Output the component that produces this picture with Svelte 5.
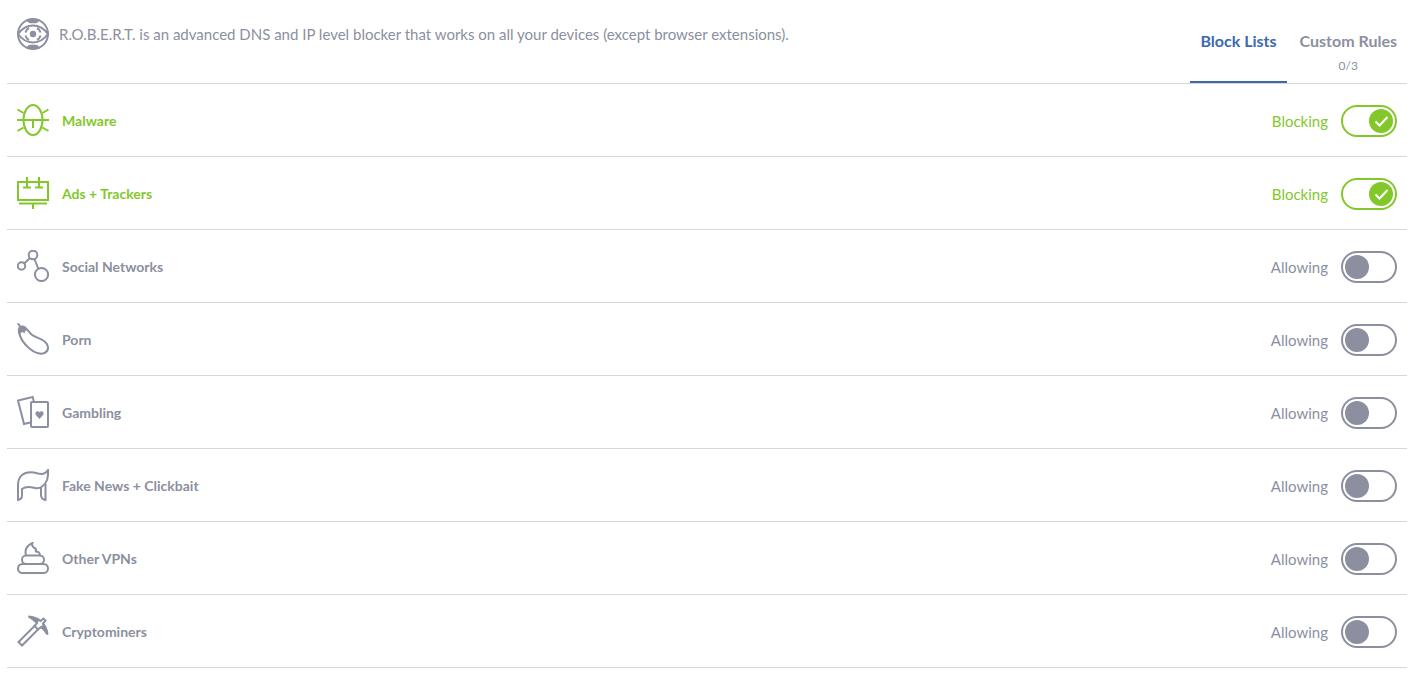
<script lang="ts">
  type BlockList = {
    id: string;
    label: string;
    blocking: boolean;
  };

  let activeTab = $state<'lists' | 'rules'>('lists');

  let lists = $state<BlockList[]>([
    { id: 'malware', label: 'Malware', blocking: true },
    { id: 'ads', label: 'Ads + Trackers', blocking: true },
    { id: 'social', label: 'Social Networks', blocking: false },
    { id: 'porn', label: 'Porn', blocking: false },
    { id: 'gambling', label: 'Gambling', blocking: false },
    { id: 'fakenews', label: 'Fake News + Clickbait', blocking: false },
    { id: 'vpns', label: 'Other VPNs', blocking: false },
    { id: 'crypto', label: 'Cryptominers', blocking: false }
  ]);

  const rulesUsed = 0;
  const rulesLimit = 3;
</script>

<main class="robert">
  <header class="header">
    <div class="intro">
      <svg class="icon" viewBox="0 0 32 32" aria-hidden="true">
        <circle cx="16" cy="16" r="15" />
        <path d="M1 16C5 10.500 10 7.500 16 7.500s11 3 15 8.500c-4 5.500-9 8.500-15 8.500S5 21.500 1 16z" />
        <path d="M12 10a7 7 0 0 0-3.500 4.500M8.500 17.500A7 7 0 0 0 12 22M20 10a7 7 0 0 1 3.500 4.500M23.500 17.500A7 7 0 0 1 20 22" />
        <circle class="solid" cx="16" cy="16" r="3.200" />
        <path class="solid" d="M9 1.500h14c-1 2-2.500 3.700-4.500 3.700h-5C11.500 5.200 10 3.500 9 1.500zM9 30.500h14c-1-2-2.500-3.700-4.500-3.700h-5c-2 0-3.500 1.700-4.500 3.700z" />
      </svg>
      <p>R.O.B.E.R.T. is an advanced DNS and IP level blocker that works on all your devices (except browser extensions).</p>
    </div>

    <nav class="tabs">
      <button class="tab" class:active={activeTab === 'lists'} onclick={() => (activeTab = 'lists')}>
        Block Lists
      </button>
      <button class="tab" class:active={activeTab === 'rules'} onclick={() => (activeTab = 'rules')}>
        Custom Rules
        <span class="count">{rulesUsed}/{rulesLimit}</span>
      </button>
    </nav>
  </header>

  <ul class="lists">
    {#each lists as list (list.id)}
      <li>
        <label class="row" class:blocking={list.blocking}>
          <svg class="icon" viewBox="0 0 32 32" aria-hidden="true">
            {#if list.id === 'malware'}
              <ellipse cx="16" cy="16" rx="9.500" ry="15" />
              <path d="M0 16h32M16 16v8M.5 5.500l6 3.500M31.500 5.500l-6 3.500M.5 27l6-3.500M31.500 27l-6-3.500" />
            {:else if list.id === 'ads'}
              <path d="M1 5h30v18H1zM10 0v10M22 0v10M6 10.500h8M18 10.500h8M2 26.500h28M16 26.500V32" />
            {:else if list.id === 'social'}
              <circle cx="4.500" cy="16" r="3.700" />
              <circle cx="16" cy="5" r="4.300" />
              <circle cx="24.500" cy="24.500" r="6.600" />
              <path d="M7.200 13.500l5.700-5.500M17.500 9l3.700 9.500" />
            {:else if list.id === 'porn'}
              <path d="M2 8.500c1 7 5 12.500 10.500 17 5 4.200 11 6 15 4.500 4.500-1.800 4.500-7.500 1-10.800C24.500 15 18.500 15 14.500 11.500c-2-1.800-2.500-3.500-4.500-5" />
              <path class="solid" d="M0 .5L1.800 0l2 2.700c3-.8 5.700.6 7.700 4.800L8.500 7.500 7.500 10 5 9 2 12C.6 9 .2 6 2 3.800z" />
            {:else if list.id === 'gambling'}
              <rect x="14" y="6" width="17" height="25" rx="1" />
              <path d="M17 6l-1.300-5L1 4.500l6 23.500 6-1.500" />
              <path class="solid" d="M22.500 23l-3.400-3.700c-2.300-2.800 1.500-5.700 3.400-3 1.900-2.700 5.700.2 3.400 3z" />
            {:else if list.id === 'fakenews'}
              <path d="M5 20c4.500-3.500 9-2 13-1 5 1.200 10-2.500 12-8 1-3 1.200-6.500 1-10-2.200 3.800-6 4.500-10 3.500C14.500 2.500 9 2.500 5 6c-3 2.500-4 6-4 10.500V31c3-.5 4-2 4-4.500V20z" />
              <path d="M24 18.500V26c0 3 1.500 4.500 4.500 5V15" />
            {:else if list.id === 'vpns'}
              <path d="M9 13.500C7.500 8 10 3.500 15.500 1c-1 2.500 0 4 2 5s2 2.500.5 3.500c3-.3 5 1.200 5 4" />
              <rect x="5" y="13.500" width="22" height="8.500" rx="4.200" />
              <rect x="1" y="22" width="30" height="9" rx="4.500" />
            {:else}
              <path d="M17.500 11L1.500 27l3.500 3.500L21 14.500" />
              <path d="M11.500 1.500c5 .3 8.500 1.500 12 4.500L26.500 3.500 28.500 5.500l-2.500 3c2.600 3 4 6.500 4.500 11-2-3-4-5.500-6.500-7.500l-3 2.500L17.500 11 20 8c-2.500-2.500-5-4.500-8.500-6.500z" />
              <path class="solid" d="M11.500 1.500c5 .3 8 1.500 11 4L20 8zM31 19.500c-.5-4.500-2-8-4.500-11L24 12z" />
            {/if}
          </svg>
          <span class="name">{list.label}</span>
          <span class="status">{list.blocking ? 'Blocking' : 'Allowing'}</span>
          <input type="checkbox" role="switch" bind:checked={list.blocking} />
          <span class="switch" aria-hidden="true">
            <span class="knob">
              {#if list.blocking}
                <svg class="check" viewBox="0 0 24 24"><path d="M6.500 12.500l4 4 8-8.500" /></svg>
              {/if}
            </span>
          </span>
        </label>
      </li>
    {/each}
  </ul>
</main>

<style>
  :global(body) {
    margin: 0;
    background: #fff;
  }

  .robert {
    --grey: #8b8fa0;
    --green: #83c82b;
    --blue: #3c69af;
    --line: #d5d8db;
    padding: 0 7px;
    color: var(--grey);
    font-family: Lato, 'Liberation Sans', sans-serif;
    font-size: 16px;
    line-height: 20px;
  }

  .header {
    display: flex;
    justify-content: space-between;
    border-bottom: 1px solid var(--line);
  }

  .intro {
    display: flex;
    align-items: flex-start;
    gap: 10px;
    padding: 18px 10px;
  }

  .intro p {
    margin: 0;
    padding-top: 6px;
    font-size: 15px;
  }

  .icon {
    flex: none;
    width: 32px;
    height: 32px;
    fill: none;
    stroke: currentColor;
    stroke-width: 2;
  }

  .solid {
    fill: currentColor;
    stroke: none;
  }

  .tabs {
    display: flex;
    flex: none;
    gap: 3px;
  }

  .tab {
    display: flex;
    flex-direction: column;
    align-items: center;
    gap: 6px;
    padding: 31px 10px 6px;
    border: 0;
    border-bottom: 2px solid transparent;
    background: none;
    color: inherit;
    font: inherit;
    font-weight: 700;
    cursor: pointer;
  }

  .tab.active {
    border-bottom-color: var(--blue);
    color: var(--blue);
  }

  .count {
    font-size: 12px;
    font-weight: 400;
    line-height: 18px;
  }

  .lists {
    margin: 0;
    padding: 0;
    list-style: none;
  }

  .row {
    display: flex;
    position: relative;
    align-items: flex-end;
    padding: 0 10px 19px;
    border-bottom: 1px solid var(--line);
    line-height: 32px;
    cursor: pointer;
  }

  .row .icon {
    padding: 20px 0 1px;
  }

  .row.blocking .icon,
  .row.blocking .name,
  .row.blocking .status,
  .row.blocking .switch {
    color: var(--green);
  }

  .name {
    flex: 1;
    padding-left: 13px;
    font-size: 14px;
    font-weight: 700;
  }

  .status {
    padding-right: 13px;
    font-size: 15px;
  }

  /* the native box stays focusable under the drawn switch */
  input {
    position: absolute;
    right: 10px;
    width: 56px;
    height: 32px;
    margin: 0;
    opacity: 0;
    cursor: pointer;
  }

  .switch {
    display: flex;
    box-sizing: border-box;
    width: 56px;
    height: 32px;
    padding: 2px;
    border: 2px solid currentColor;
    border-radius: 16px;
  }

  .blocking .switch {
    justify-content: flex-end;
  }

  .knob {
    width: 24px;
    height: 24px;
    border-radius: 50%;
    background: currentColor;
  }

  .check {
    display: block;
    fill: none;
    stroke: #fff;
    stroke-width: 2;
  }

  input:focus-visible + .switch {
    outline: 2px solid var(--blue);
    outline-offset: 2px;
  }
</style>
